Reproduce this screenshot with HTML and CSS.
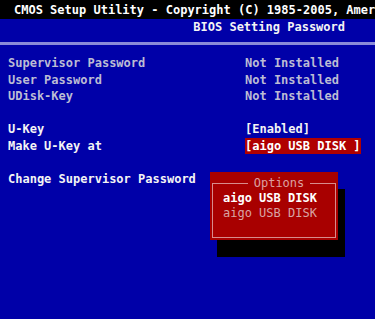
FILE: index.html
```html
<!DOCTYPE html>
<html>
<head>
<meta charset="utf-8">
<link rel="stylesheet" href="styles.css">
</head>
<body>
<div class="screen">
  <div class="title-bar">CMOS Setup Utility - Copyright (C) 1985-2005, Amer</div>
  <div class="subtitle">BIOS Setting Password</div>
  <div class="sep"></div>
  <div class="content">
    <div class="row"><span class="label dim">Supervisor Password</span><span class="value dim">Not Installed</span></div>
    <div class="row"><span class="label dim">User Password</span><span class="value dim">Not Installed</span></div>
    <div class="row"><span class="label dim">UDisk-Key</span><span class="value dim">Not Installed</span></div>
    <div class="row"></div>
    <div class="row"><span class="label">U-Key</span><span class="value">[Enabled]</span></div>
    <div class="row"><span class="label">Make U-Key at</span><span class="value"><span class="selected">[aigo USB DISK ]</span></span></div>
    <div class="row"></div>
    <div class="row"><span class="label">Change Supervisor Password</span></div>
  </div>
  <div class="popup">
    <fieldset class="frame">
      <legend class="frame-title">Options</legend>
      <div class="opt active">aigo USB DISK</div>
      <div class="opt">aigo USB DISK</div>
    </fieldset>
  </div>
</div>
</body>
</html>
```

FILE: styles.css
```css
html, body {
  margin: 0;
  padding: 0;
  background: #0000a8;
}
.screen {
  position: relative;
  width: 375px;
  height: 319px;
  overflow: hidden;
  background: #0000a8;
  font-family: "DejaVu Sans Mono", "Liberation Mono", monospace;
  font-size: 12px;
  font-weight: bold;
  color: #f4f4f4;
}
.title-bar {
  height: 19px;
  line-height: 21px;
  padding-left: 14px;
  background: #000;
  color: #fff;
  white-space: nowrap;
  overflow: hidden;
}
.subtitle {
  height: 23px;
  line-height: 17px;
  text-align: right;
  padding-right: 30px;
  color: #f4f4f4;
  white-space: nowrap;
}
.sep {
  height: 3px;
  background: #8a8ad8;
}
.content {
  padding: 10px 0 0 8px;
}
.row {
  display: flex;
  height: 16.5px;
  line-height: 16.5px;
  white-space: nowrap;
}
.label {
  width: 237px;
}
.dim {
  color: #bcbcd4;
}
.selected {
  background: #b00000;
  color: #fff;
  padding: 1px 0;
}
.popup {
  position: absolute;
  left: 210px;
  top: 172px;
  width: 128px;
  height: 68px;
  box-sizing: border-box;
  padding: 3px 2px 0 2px;
  background: #a80000;
  box-shadow: 7px 17px 0 #000;
}
.frame {
  margin: 0;
  min-width: 0;
  padding: 0 0 0 10px;
  border: 1px solid #d88c8c;
  height: 63px;
  box-sizing: border-box;
}
.frame-title {
  margin: 0 auto;
  padding: 0 6px;
  line-height: 16px;
  font-weight: normal;
  color: #dca0a0;
}
.opt {
  line-height: 15px;
  white-space: nowrap;
  color: #d8a4a4;
  font-weight: normal;
}
.opt.active {
  color: #fff;
  font-weight: bold;
}
```
